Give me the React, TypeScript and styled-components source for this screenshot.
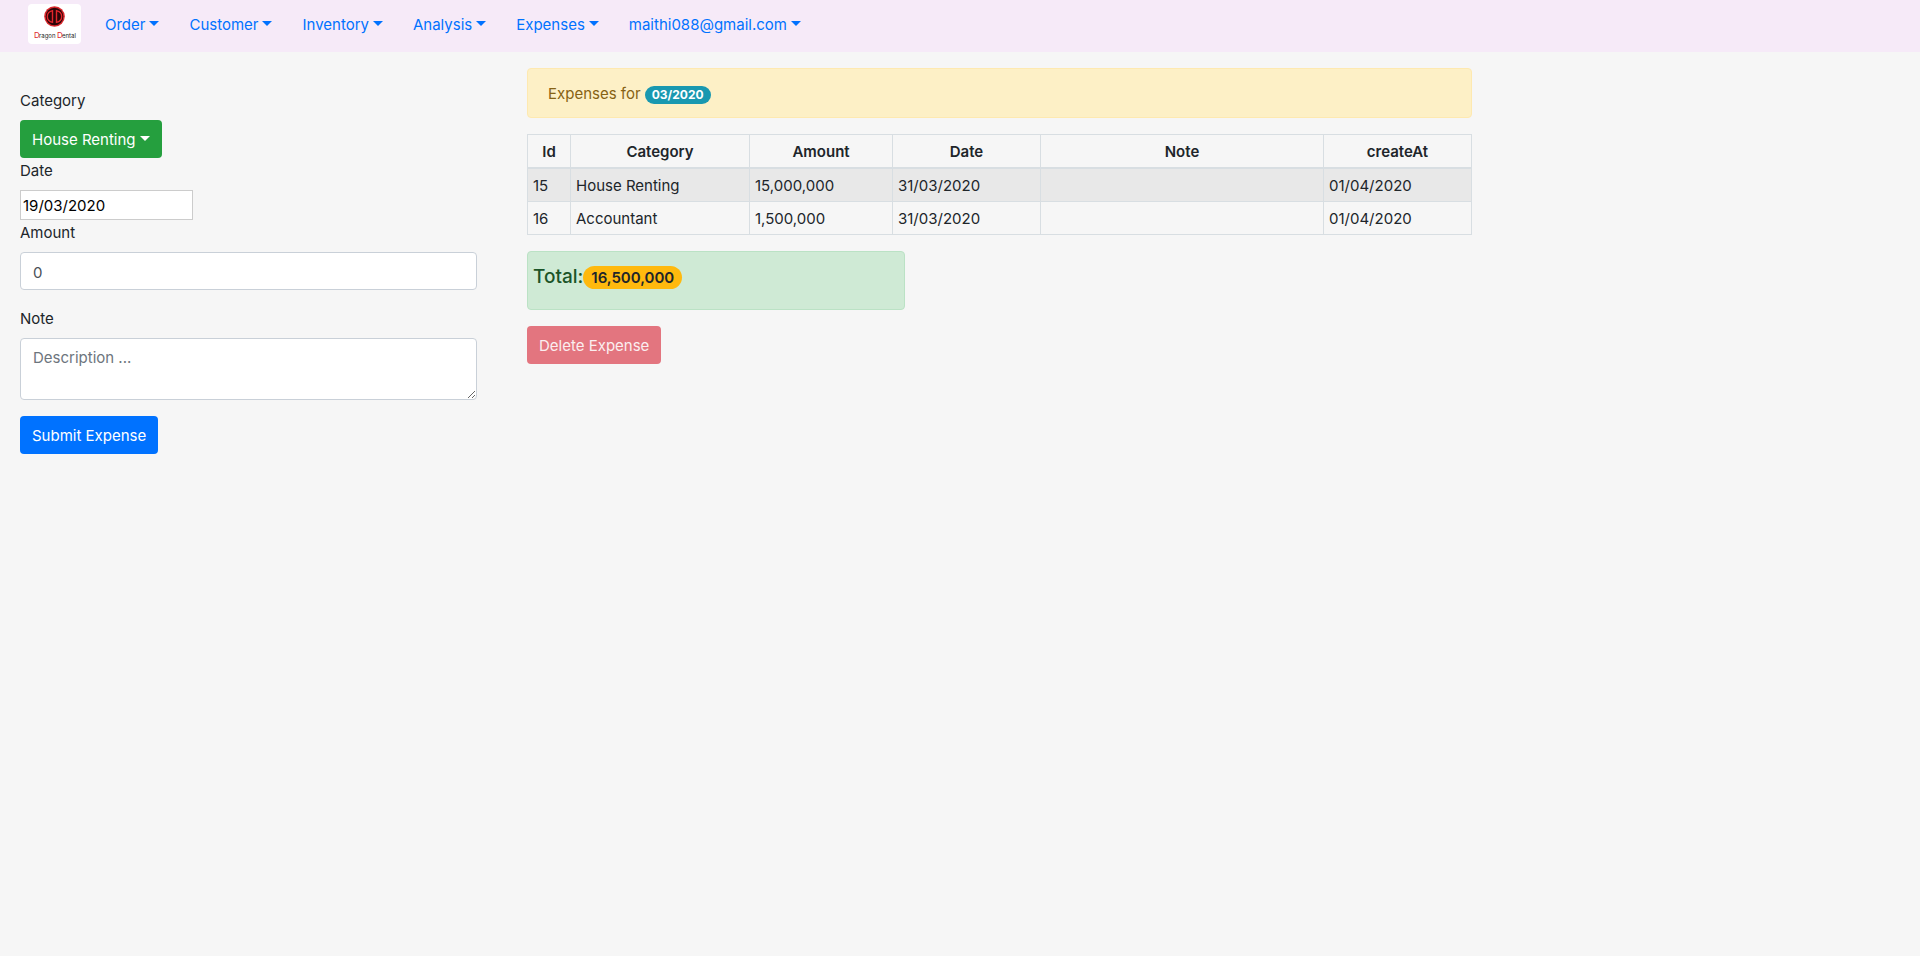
import React from "react";
import styled, { createGlobalStyle, css } from "styled-components";

const GlobalStyle = createGlobalStyle`
  *, *::before, *::after { box-sizing: border-box; }
  body {
    margin: 0;
    background: #f6f6f6;
    color: #20252a;
    font-family: Inter, "Liberation Sans", sans-serif;
    font-size: 15px;
    line-height: 24px;
  }
  button, input, textarea { font: inherit; }
`;

const Navbar = styled.nav`
  display: flex;
  align-items: flex-start;
  height: 52px;
  padding: 4px 28px;
  background: #f6eaf8;
`;

const Brand = styled.a`
  display: block;
  width: 53px;
  height: 40px;
  margin-right: 24px;
  border-radius: 4px;
  background: #fff;

  svg { display: block; }
`;

const NavList = styled.ul`
  display: flex;
  gap: 30px;
  margin: 0;
  padding: 9px 0;
  list-style: none;
`;

const caret = css`
  &::after {
    content: "";
    display: inline-block;
    margin-left: 4px;
    vertical-align: 4px;
    border-top: 5px solid;
    border-right: 5px solid transparent;
    border-left: 5px solid transparent;
  }
`;

const NavLink = styled.a`
  display: block;
  color: #0072ff;
  text-decoration: none;
  white-space: nowrap;
  ${caret}
`;

const Page = styled.main`
  display: grid;
  grid-template-columns: calc(25% - 3px) calc(50% - 15px);
  column-gap: 50px;
  align-items: start;
`;

const ExpenseForm = styled.form`
  padding: 36px 0 0 20px;
`;

const Field = styled.div<{ $spaced?: boolean }>`
  display: flex;
  flex-direction: column;
  align-items: flex-start;
  gap: 6px;
  margin-bottom: ${(p) => (p.$spaced ? "16px" : "0")};

  label { line-height: 26px; }
`;

const tones = {
  success: "#259f3e",
  primary: "#0072ff",
  danger: "#e3757f",
};

const Button = styled.button<{ $tone: keyof typeof tones; $menu?: boolean }>`
  height: 38px;
  padding: 2px 12px 0;
  border: 0;
  border-radius: 4px;
  background: ${(p) => tones[p.$tone]};
  color: ${(p) => (p.$tone === "danger" ? "#fbeeef" : "#fff")};
  white-space: nowrap;
  ${(p) => p.$menu && caret}
`;

const DateInput = styled.input`
  width: 173px;
  height: 30px;
  padding: 0 2px;
  border: 1px solid #ccc;
  background: #fff;
  color: #000;
`;

const controlStyle = css`
  display: block;
  width: 100%;
  padding: 7px 12px 5px;
  border: 1px solid #c9d0d8;
  border-radius: 4px;
  background: #fff;
  color: #4a5057;
`;

const TextInput = styled.input`
  ${controlStyle}
  height: 38px;
`;

const TextArea = styled.textarea`
  ${controlStyle}
  height: 62px;
  resize: vertical;

  &::placeholder { color: #6d757d; opacity: 1; }
`;

const Results = styled.section`
  display: flex;
  flex-direction: column;
  align-items: flex-start;
  gap: 16px;
  padding-top: 16px;
`;

const MonthBanner = styled.div`
  width: 100%;
  padding: 13px 20px 11px;
  border: 1px solid #fee9b0;
  border-radius: 4px;
  background: #fdf0c6;
  color: #866214;
`;

const Badge = styled.span<{ $large?: boolean }>`
  display: inline-block;
  border-radius: 12px;
  ${(p) =>
    p.$large
      ? css`
          padding: 0 8px;
          background: #ffb90e;
          color: #20252a;
          font-size: 15px;
          font-weight: 600;
          line-height: 23px;
        `
      : css`
          padding: 0 7px;
          background: #1998b0;
          color: #fff;
          font-size: 12px;
          font-weight: 700;
          line-height: 18px;
        `}
`;

const Table = styled.table`
  width: 100%;
  table-layout: fixed;
  border-collapse: collapse;

  th, td {
    height: 33px;
    padding: 5px 5px 3px;
    border: 1px solid #d8dee2;
    text-align: left;
  }
  th {
    border-bottom-width: 2px;
    text-align: center;
    font-weight: 600;
  }
  tbody tr:nth-child(odd) { background: #e8e8e8; }
`;

const Total = styled.div`
  display: flex;
  align-items: flex-start;
  width: 40%;
  height: 59px;
  padding: 12px 5px;
  border: 1px solid #bbe2c5;
  border-radius: 4px;
  background: #cfead5;
  color: #1b5428;
`;

const TotalLabel = styled.h2`
  margin: 0;
  font-size: 19px;
  font-weight: 500;
  line-height: 26px;

  ${Badge} { margin-top: 2px; vertical-align: top; }
`;

const Logo = () => (
  <svg width="53" height="40" viewBox="0 0 53 40" aria-hidden="true">
    <circle cx="26.5" cy="12.5" r="10.3" fill="#d8262b" />
    <circle cx="26.5" cy="12.5" r="8.8" fill="#2a0508" />
    <g fill="none" stroke="#e3262c" strokeWidth="1.4">
      <path d="M24.5 6.6 C17.6 8.2 17.6 16.8 24.5 18.4 Z" />
      <path d="M28.5 6.6 C35.4 8.2 35.4 16.8 28.5 18.4 Z" />
    </g>
    <g fontFamily="Inter, sans-serif" fontSize="6" fill="#222">
      <text x="6" y="33.5" fontSize="8" fill="#e0262c">D</text>
      <text x="11" y="33.5">ragon</text>
      <text x="29" y="33.5" fontSize="8" fill="#e0262c">D</text>
      <text x="34" y="33.5">ental</text>
    </g>
  </svg>
);

const menus = ["Order", "Customer", "Inventory", "Analysis", "Expenses", "maithi088@gmail.com"];

const columns = [
  { title: "Id", width: 43 },
  { title: "Category", width: 179 },
  { title: "Amount", width: 143 },
  { title: "Date", width: 148 },
  { title: "Note", width: 283 },
  { title: "createAt", width: 148 },
];
const totalWidth = columns.reduce((sum, c) => sum + c.width, 0);

const expenses = [
  ["15", "House Renting", "15,000,000", "31/03/2020", "", "01/04/2020"],
  ["16", "Accountant", "1,500,000", "31/03/2020", "", "01/04/2020"],
];

export default function App() {
  return (
    <>
      <GlobalStyle />
      <Navbar>
        <Brand href="#" aria-label="Dragon Dental">
          <Logo />
        </Brand>
        <NavList>
          {menus.map((name) => (
            <li key={name}>
              <NavLink href="#">{name}</NavLink>
            </li>
          ))}
        </NavList>
      </Navbar>
      <Page>
        <ExpenseForm>
          <Field>
            <label htmlFor="category">Category</label>
            <Button id="category" type="button" $tone="success" $menu>
              House Renting
            </Button>
          </Field>
          <Field>
            <label htmlFor="date">Date</label>
            <DateInput id="date" type="text" defaultValue="19/03/2020" />
          </Field>
          <Field $spaced>
            <label htmlFor="amount">Amount</label>
            <TextInput id="amount" type="text" defaultValue="0" />
          </Field>
          <Field $spaced>
            <label htmlFor="note">Note</label>
            <TextArea id="note" placeholder="Description ..." />
          </Field>
          <Button type="button" $tone="primary">
            Submit Expense
          </Button>
        </ExpenseForm>
        <Results>
          <MonthBanner>
            Expenses for <Badge>03/2020</Badge>
          </MonthBanner>
          <Table>
            <colgroup>
              {columns.map((c) => (
                <col key={c.title} style={{ width: `${(c.width / totalWidth) * 100}%` }} />
              ))}
            </colgroup>
            <thead>
              <tr>
                {columns.map((c) => (
                  <th key={c.title} scope="col">{c.title}</th>
                ))}
              </tr>
            </thead>
            <tbody>
              {expenses.map((row) => (
                <tr key={row[0]}>
                  {row.map((cell, i) => (
                    <td key={i}>{cell}</td>
                  ))}
                </tr>
              ))}
            </tbody>
          </Table>
          <Total>
            <TotalLabel>
              Total:<Badge $large>16,500,000</Badge>
            </TotalLabel>
          </Total>
          <Button type="button" $tone="danger">
            Delete Expense
          </Button>
        </Results>
      </Page>
    </>
  );
}
